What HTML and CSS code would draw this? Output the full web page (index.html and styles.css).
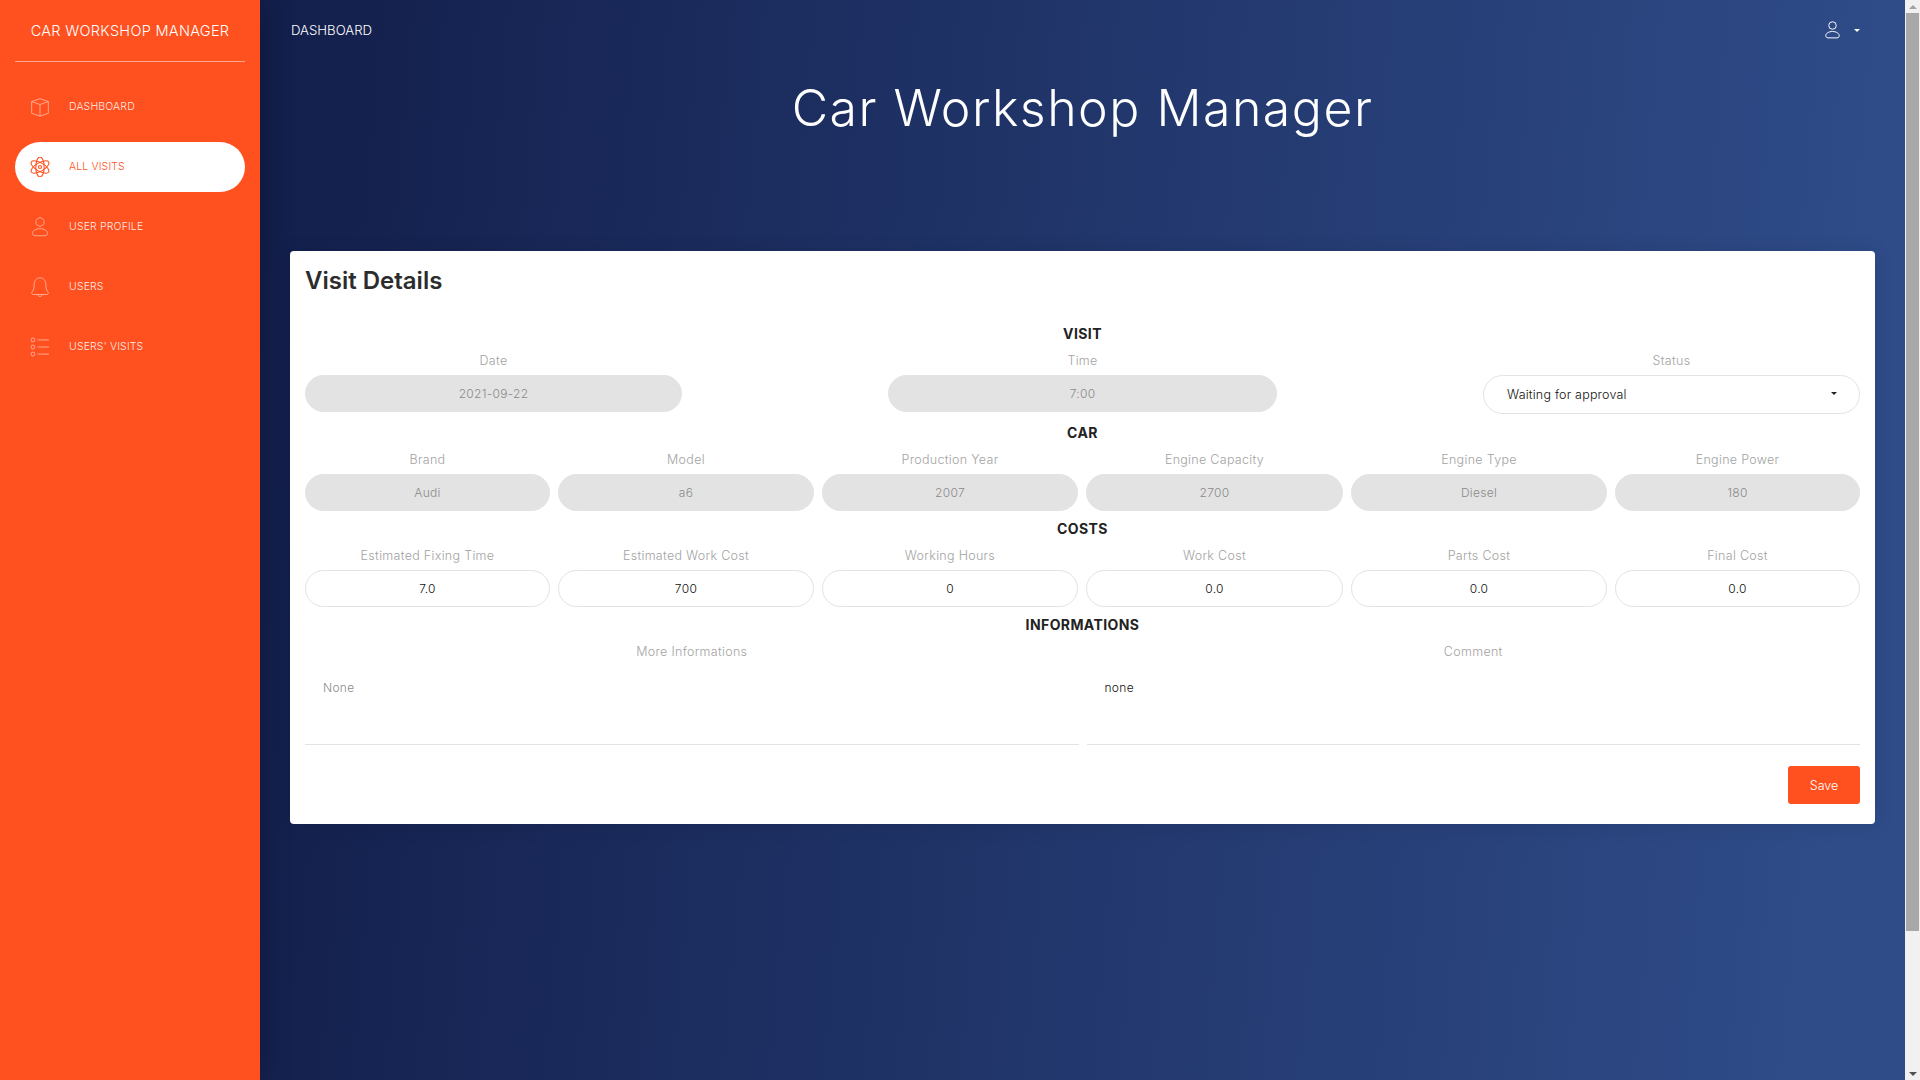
FILE: index.html
```html
<!DOCTYPE html>
<html>
<head>
  <meta charset="utf-8">
  <title>Car Workshop Manager</title>
  <link rel="stylesheet" href="styles.css">
</head>
<body>
  <div class="app">
    <aside class="sidebar">
      <div class="brand">CAR WORKSHOP MANAGER</div>
      <ul class="nav">
        <li class="nav-item">
          <svg class="nav-icon" viewBox="0 0 24 24"><path d="M2 5.500 12 2l10 3.500v14L12 23 2 19.500zM2 5.500 12 9l10-3.500M12 9v14"/></svg>
          <span>Dashboard</span>
        </li>
        <li class="nav-item active">
          <svg class="nav-icon" viewBox="0 0 24 24"><circle cx="12" cy="12" r="1.800"/><ellipse cx="12" cy="12" rx="5" ry="12"/><ellipse cx="12" cy="12" rx="5" ry="12" transform="rotate(60 12 12)"/><ellipse cx="12" cy="12" rx="5" ry="12" transform="rotate(120 12 12)"/></svg>
          <span>All Visits</span>
        </li>
        <li class="nav-item">
          <svg class="nav-icon" viewBox="0 0 24 24"><circle cx="12" cy="6" r="5"/><path d="M3 19.500c0-3 4-5.500 9-5.500s9 2.500 9 5.500c0 1.500-1 3-3 3H6c-2 0-3-1.500-3-3z"/></svg>
          <span>User Profile</span>
        </li>
        <li class="nav-item">
          <svg class="nav-icon" viewBox="0 0 24 24"><path d="M12 1c-4.500 0-7 3.500-7 8 0 4.500-.5 7-3 9.500-.5 1.500 1 2.500 2.500 2.500h15c1.500 0 3-1 2.500-2.500-2.500-2.500-3-5-3-9.500 0-4.500-2.500-8-7-8zM9.500 21c0 1.500 1 2.500 2.500 2.500s2.500-1 2.500-2.500"/></svg>
          <span>Users</span>
        </li>
        <li class="nav-item">
          <svg class="nav-icon" viewBox="0 0 24 24"><circle cx="3.500" cy="3.500" r="2.300"/><circle cx="3.500" cy="12" r="2.300"/><circle cx="3.500" cy="20.500" r="2.300"/><path d="M9 3.500h14M9 12h14M9 20.500h14"/></svg>
          <span>Users' Visits</span>
        </li>
      </ul>
    </aside>

    <main class="main">
      <header class="topbar">
        <span class="topbar-title">DASHBOARD</span>
        <div class="user-menu">
          <svg class="user-icon" viewBox="0 0 20 24"><circle cx="10" cy="6" r="5"/><path d="M1 19.500c0-3 4-5.500 9-5.500s9 2.500 9 5.500c0 1.500-1 3-3 3H4c-2 0-3-1.500-3-3z"/></svg>
          <span class="caret"></span>
        </div>
      </header>

      <h1 class="page-title">Car Workshop Manager</h1>

      <section class="card">
        <h4 class="card-title">Visit Details</h4>

        <h5 class="section-title">VISIT</h5>
        <div class="row row-visit">
          <div class="field">
            <label>Date</label>
            <input class="input" value="2021-09-22" disabled>
          </div>
          <div class="field">
            <label>Time</label>
            <input class="input" value="7:00" disabled>
          </div>
          <div class="field">
            <label>Status</label>
            <div class="select">
              <span>Waiting for approval</span>
              <span class="caret caret-dark"></span>
            </div>
          </div>
        </div>

        <h5 class="section-title">CAR</h5>
        <div class="row row-six">
          <div class="field"><label>Brand</label><input class="input" value="Audi" disabled></div>
          <div class="field"><label>Model</label><input class="input" value="a6" disabled></div>
          <div class="field"><label>Production Year</label><input class="input" value="2007" disabled></div>
          <div class="field"><label>Engine Capacity</label><input class="input" value="2700" disabled></div>
          <div class="field"><label>Engine Type</label><input class="input" value="Diesel" disabled></div>
          <div class="field"><label>Engine Power</label><input class="input" value="180" disabled></div>
        </div>

        <h5 class="section-title">COSTS</h5>
        <div class="row row-six">
          <div class="field"><label>Estimated Fixing Time</label><input class="input" value="7.0"></div>
          <div class="field"><label>Estimated Work Cost</label><input class="input" value="700"></div>
          <div class="field"><label>Working Hours</label><input class="input" value="0"></div>
          <div class="field"><label>Work Cost</label><input class="input" value="0.0"></div>
          <div class="field"><label>Parts Cost</label><input class="input" value="0.0"></div>
          <div class="field"><label>Final Cost</label><input class="input" value="0.0"></div>
        </div>

        <h5 class="section-title">INFORMATIONS</h5>
        <div class="row row-two">
          <div class="field"><label>More Informations</label><textarea class="textarea" disabled>None</textarea></div>
          <div class="field"><label>Comment</label><textarea class="textarea">none</textarea></div>
        </div>

        <div class="card-footer">
          <button class="btn-save">Save</button>
        </div>
      </section>
    </main>

    <div class="scrollbar">
      <span class="arrow arrow-up"></span>
      <div class="thumb"></div>
      <span class="arrow arrow-down"></span>
    </div>
  </div>
</body>
</html>
```

FILE: styles.css
```css
* {
  box-sizing: border-box;
}
html, body {
  margin: 0;
  height: 100%;
  overflow: hidden;
}
body {
  font-family: Inter, "Open Sans", sans-serif;
  font-weight: 300;
  color: #222;
}
.app {
  display: flex;
  height: 1080px;
  background: linear-gradient(95deg, #131f4c 14%, #2f4c89 95%);
}

/* sidebar */
.sidebar {
  width: 260px;
  flex: none;
  background: #ff5120;
  color: #fff;
  box-shadow: 0 0 30px rgba(0, 0, 0, .25);
}
.brand {
  height: 62px;
  margin: 0 15px;
  padding-top: 22px;
  border-bottom: 1px solid rgba(255, 255, 255, .5);
  font-size: 14.500px;
  letter-spacing: .3px;
  line-height: 18px;
  text-align: center;
  white-space: nowrap;
}
.nav {
  list-style: none;
  margin: 20px 0 0;
  padding: 0;
}
.nav-item {
  display: flex;
  align-items: center;
  height: 50px;
  margin: 0 15px 10px;
  padding-left: 15px;
  padding-bottom: 1px;
  border-radius: 25px;
  font-size: 10.500px;
  letter-spacing: .15px;
  text-transform: uppercase;
  color: rgba(255, 255, 255, .9);
}
.nav-item.active {
  background: #fff;
  color: #ff5120;
}
.nav-icon {
  width: 20px;
  height: 20px;
  margin-right: 19px;
  fill: none;
  stroke: currentColor;
  stroke-width: 1.100;
  opacity: .6;
}
.active .nav-icon {
  opacity: 1;
  stroke-width: 1.300;
}

/* main area */
.main {
  flex: 1;
  min-width: 0;
  padding: 0 30px;
}
.topbar {
  display: flex;
  justify-content: space-between;
  align-items: center;
  height: 60px;
  padding: 0 15px 0 1px;
  color: #fff;
}
.topbar-title {
  font-size: 13.200px;
  font-weight: 300;
}
.user-menu {
  display: flex;
  align-items: center;
  gap: 15px;
}
.user-icon {
  width: 15px;
  height: 18px;
  margin-right: -1px;
  fill: none;
  stroke: #fff;
  stroke-width: 1.300;
}
.caret {
  width: 0;
  height: 0;
  border: 3.500px solid transparent;
  border-top-color: #fff;
  border-bottom: 0;
}
.caret-dark {
  border-top-color: #222;
  margin-top: -3px;
}
.page-title {
  height: 191px;
  margin: 0;
  padding-top: 17px;
  font-size: 50px;
  letter-spacing: 1.500px;
  line-height: 62px;
  font-weight: 300;
  color: #fff;
  text-align: center;
}

/* card */
.card {
  background: #fff;
  border-radius: 4px;
  padding: 15px;
  height: 573px;
  box-shadow: 0 1px 20px rgba(0, 0, 0, .1);
}
.card-title {
  margin: 0;
  font-size: 24px;
  line-height: 29px;
  font-weight: 600;
  color: #2c2c2c;
}
.section-title {
  margin: 9px 0 0;
  font-size: 14px;
  letter-spacing: .4px;
  line-height: 18px;
  font-weight: 700;
  text-align: center;
}
.card-title + .section-title {
  margin-top: 30px;
}
.row {
  display: grid;
  gap: 8px;
  margin-top: 10px;
}
.row-visit {
  grid-template-columns: 377px 389px 377px;
  justify-content: space-between;
  margin-bottom: 10px;
}
.row-six {
  grid-template-columns: 245px 256px 256px 257px 256px 245px;
}
.row-two {
  grid-template-columns: 1fr 1fr;
}
.field {
  min-width: 0;
}
.field label {
  display: block;
  height: 16px;
  margin-bottom: 6px;
  font-size: 12.500px;
  letter-spacing: .3px;
  line-height: 16px;
  color: #a3a3a3;
  text-align: center;
}
.input {
  display: block;
  width: 100%;
  height: 37px;
  padding: 0 10px;
  border: 1px solid #e3e3e3;
  border-radius: 19px;
  background: #fff;
  font: inherit;
  font-size: 12px;
  letter-spacing: .3px;
  font-weight: 300;
  color: #111;
  text-align: center;
}
.input:disabled {
  background: #e3e3e3;
  color: #8a8a8a;
}
.select {
  display: flex;
  justify-content: space-between;
  align-items: center;
  height: 39px;
  padding: 0 22px 0 23px;
  border: 1px solid #e3e3e3;
  border-radius: 20px;
  font-size: 12.500px;
  letter-spacing: .2px;
  font-weight: 300;
  color: #111;
}
.textarea {
  display: block;
  width: 100%;
  height: 79px;
  padding: 14px 18px;
  border: 0;
  border-bottom: 1px solid #e3e3e3;
  background: #fff;
  resize: none;
  font: inherit;
  font-size: 12px;
  letter-spacing: .3px;
  line-height: 16px;
  font-weight: 300;
  color: #111;
}
.textarea:disabled {
  color: #8a8a8a;
}
.card-footer {
  display: flex;
  justify-content: flex-end;
  margin-top: 21px;
}
.btn-save {
  width: 72px;
  height: 38px;
  border: 0;
  border-radius: 3px;
  background: #ff5120;
  color: #fff;
  font: inherit;
  font-size: 12.500px;
  font-weight: 300;
}

/* the page's scrollbar */
.scrollbar {
  display: flex;
  flex-direction: column;
  align-items: center;
  width: 15px;
  flex: none;
  background: #f1f1f1;
}
.thumb {
  width: 13px;
  height: 918px;
  background: #a8a8a8;
}
.arrow {
  width: 0;
  height: 0;
  margin: 5px 0 4px;
  border: 4px solid transparent;
}
.arrow-up {
  border-top: 0;
  border-bottom-color: #a3a3a3;
}
.arrow-down {
  margin-top: auto;
  border-bottom: 0;
  border-top-color: #505050;
}
```
